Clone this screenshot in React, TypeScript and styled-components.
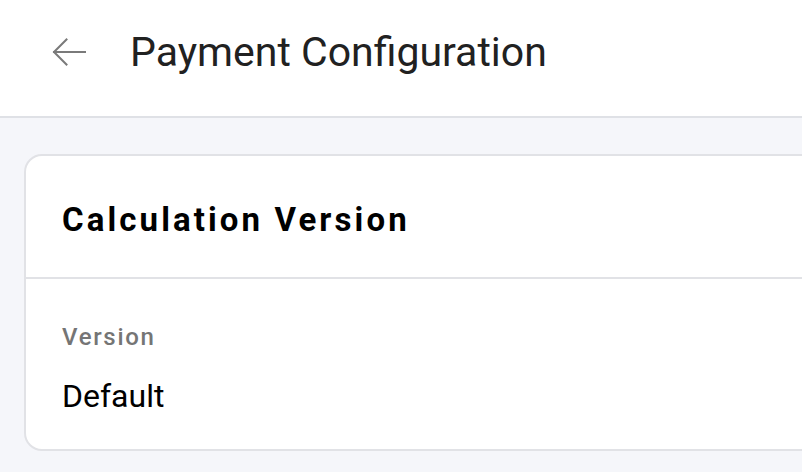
import React from "react";
import styled, { createGlobalStyle } from "styled-components";

const GlobalStyle = createGlobalStyle`
  html, body {
    margin: 0;
    padding: 0;
    background: #f5f6fa;
    font-family: Roboto, "Noto Sans", Arial, sans-serif;
    overflow: hidden;
  }
  * { box-sizing: border-box; }
`;

const Page = styled.div`
  width: 802px;
  height: 472px;
  display: flex;
  flex-direction: column;
  overflow: hidden;
  background: #f5f6fa;
`;

const Header = styled.header`
  height: 118px;
  flex: none;
  display: flex;
  align-items: center;
  gap: 44px;
  padding: 0 0 12px 52px;
  background: #ffffff;
  border-bottom: 2px solid #dfe1e6;
`;

const BackButton = styled.button`
  display: flex;
  align-items: center;
  justify-content: center;
  padding: 0;
  border: none;
  background: transparent;
  cursor: pointer;
  color: #7a7a7a;
`;

const Title = styled.h1`
  margin: 0;
  font-size: 41px;
  line-height: 48px;
  font-weight: 400;
  color: #212121;
`;

const Main = styled.main`
  flex: 1;
  padding: 36px 0 0 24px;
`;

const Card = styled.section`
  width: 840px;
  background: #ffffff;
  border: 2px solid #e1e2e6;
  border-radius: 18px;
  overflow: hidden;
`;

const CardHeader = styled.div`
  height: 123px;
  display: flex;
  align-items: center;
  padding: 6px 36px 0 36px;
  border-bottom: 2px solid #e1e2e6;
`;

const CardTitle = styled.h2`
  margin: 0;
  font-size: 33px;
  line-height: 40px;
  font-weight: 700;
  letter-spacing: 3.1px;
  color: #000000;
`;

const CardBody = styled.div`
  padding: 44px 36px 34px 36px;
  display: flex;
  flex-direction: column;
  gap: 26px;
`;

const FieldLabel = styled.div`
  font-size: 24px;
  line-height: 28px;
  font-weight: 500;
  letter-spacing: 0.07em;
  color: #757575;
`;

const FieldValue = styled.div`
  font-size: 32px;
  line-height: 38px;
  font-weight: 400;
  color: #000000;
`;

const ArrowIcon = () => (
  <svg width="34" height="28" viewBox="0 0 34 28" fill="none">
    <path
      d="M33 14H2M14.5 1.5L2 14l12.5 12.5"
      stroke="currentColor"
      strokeWidth="2"
      strokeLinecap="square"
    />
  </svg>
);

export default function App() {
  return (
    <>
      <GlobalStyle />
      <Page>
        <Header>
          <BackButton aria-label="Back">
            <ArrowIcon />
          </BackButton>
          <Title>Payment Configuration</Title>
        </Header>
        <Main>
          <Card>
            <CardHeader>
              <CardTitle>Calculation Version</CardTitle>
            </CardHeader>
            <CardBody>
              <FieldLabel>Version</FieldLabel>
              <FieldValue>Default</FieldValue>
            </CardBody>
          </Card>
        </Main>
      </Page>
    </>
  );
}
